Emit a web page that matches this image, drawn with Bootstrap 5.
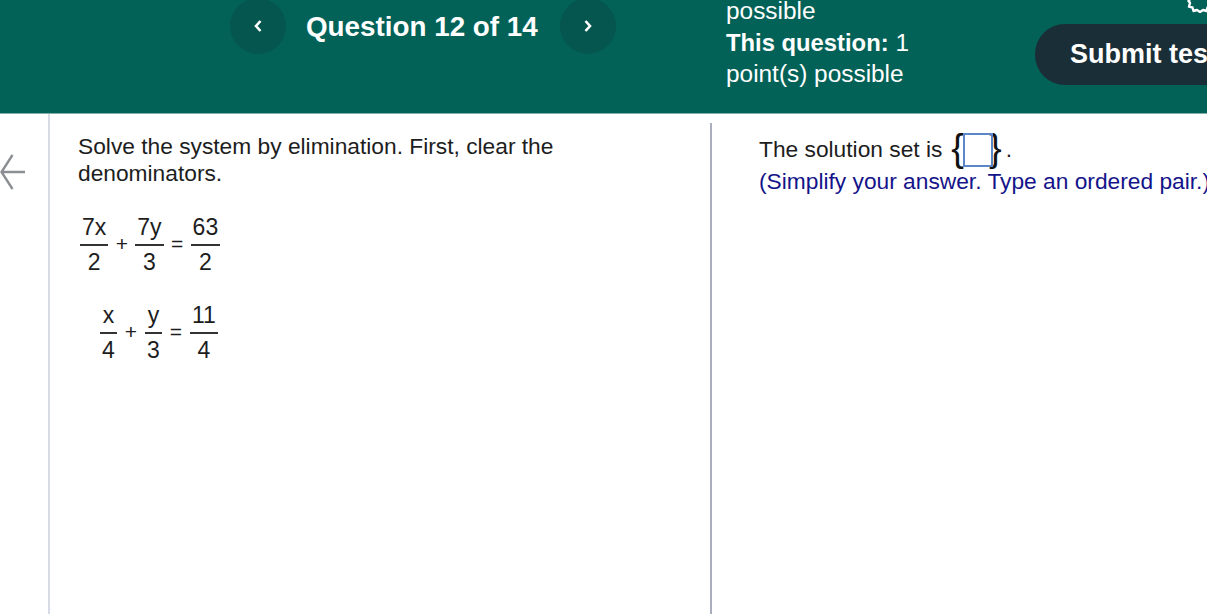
<!DOCTYPE html>
<html lang="en"><head><meta charset="utf-8"><title>Question 12 of 14</title>
<link href="https://cdn.jsdelivr.net/npm/bootstrap@5.3.0/dist/css/bootstrap.min.css" rel="stylesheet">
<style>
html,body{height:614px;overflow:hidden}
body{font-family:"Liberation Sans",Arial,sans-serif;color:#1d1d1d;background:#fff}
.topbar{height:114px;background:#036258;border-bottom:1px solid #7fb0aa;color:#fff;overflow:hidden;padding-left:230px}
.navcirc{width:56px;height:56px;margin-top:-2px;border-radius:50%;background:#05564e;flex:none}
.qtitle{font-size:27.8px;font-weight:700;width:274px;flex:none;padding-left:20px;line-height:54px;white-space:nowrap}
.pts{width:309px;flex:none;font-size:24.4px;line-height:31.5px;margin-top:-5px;margin-left:110px}
.pts b{font-weight:700;font-size:23.8px}
.submitwrap{flex:none;position:relative;width:172px}
.submitbtn{margin-top:24px;height:61px;width:260px;background:#1a2e38;color:#fff;border:0;border-radius:30px 0 0 30px;font-size:27px;font-weight:700;padding:0 0 0 35px;text-align:left;white-space:nowrap}
.gear{position:absolute;left:152px;top:-13px}
.mainrow{height:500px}
.rail{width:50px;flex:none;border-right:2px solid #d6dbe6;padding-top:39px}
.leftpane{width:660px;flex:none;padding:19px 0 0 28px;font-size:22.75px;line-height:27px}
.divline{width:2px;flex:none;background:#a9adbe;margin-top:9px}
.rightpane{flex:1 1 auto;padding:19px 0 0 47px;font-size:22.75px;line-height:32px;white-space:nowrap;overflow:hidden}
.prompt{width:490px}
.eq{display:flex;align-items:center;font-size:23px;line-height:25px}
.eq1{margin-top:28px;padding-left:2px}
.eq2{margin-top:28px;padding-left:22px}
.frac{display:inline-flex;flex-direction:column;align-items:center}
.frac span:first-child{border-bottom:2px solid #333;padding:0 2px 4px;min-width:17px;text-align:center}
.frac span:last-child{padding-top:4px}
.op{font-size:21px;width:27px;text-align:center;margin-top:-3px}
.eq2 .op{width:28px}
.hint{color:#14148a}
.ansline{display:flex;align-items:center;height:32px}
.ansbox{display:block;width:30px;height:34px;border:2px solid #5b86c9;margin:1px -4px 0 -1px;position:relative}
.brc{font-size:38px;line-height:32px;color:#111;margin-top:-3px}
.brcl{margin-left:9px}
.dotend{margin-left:4px}
</style></head>
<body>
<header class="topbar d-flex align-items-start">
  <div class="navcirc d-flex align-items-center justify-content-center"><svg width="10" height="14" viewBox="0 0 10 14"><path d="M7.500 2 3 7l4.500 5" fill="none" stroke="#fff" stroke-width="2.600"/></svg></div>
  <div class="qtitle">Question 12 of 14</div>
  <div class="navcirc d-flex align-items-center justify-content-center"><svg width="10" height="14" viewBox="0 0 10 14"><path d="M2.500 2 7 7l-4.500 5" fill="none" stroke="#fff" stroke-width="2.600"/></svg></div>
  <div class="pts"><div>possible<br><b>This question:</b> 1<br>point(s) possible</div></div>
  <div class="submitwrap">
    <svg class="gear" width="26" height="26" viewBox="0 0 26 26"><path d="M13 2.500l3 2.500 3.500-1 1 3.500 3.500 1-1 3.500 1.500 2-1.500 2 1 3.500-3.500 1-1 3.500-3.500-1-3 2-3-2-3.500 1-1-3.500-3.500-1 1-3.500-1.500-2 1.500-2-1-3.500 3.500-1 1-3.500 3.500 1z" fill="none" stroke="#fff" stroke-width="2.400" stroke-linejoin="round"/></svg>
    <button class="submitbtn" type="button">Submit test</button>
  </div>
</header>
<main class="mainrow d-flex">
  <div class="rail"><svg width="26" height="38" viewBox="0 0 26 38"><path d="M25 19H2M12.500 2 1.500 19l11 17" fill="none" stroke="#8b8f93" stroke-width="2.400"/></svg></div>
  <section class="leftpane">
    <div class="prompt">Solve the system by elimination. First, clear the denominators.</div>
    <div class="eq eq1"><span class="frac"><span>7x</span><span>2</span></span><span class="op">+</span><span class="frac"><span>7y</span><span>3</span></span><span class="op">=</span><span class="frac"><span>63</span><span>2</span></span></div>
    <div class="eq eq2"><span class="frac"><span>x</span><span>4</span></span><span class="op">+</span><span class="frac"><span>y</span><span>3</span></span><span class="op">=</span><span class="frac"><span>11</span><span>4</span></span></div>
  </section>
  <div class="divline"></div>
  <section class="rightpane">
    <div class="ansline"><span>The solution set is</span><span class="brc brcl">{</span><span class="ansbox"></span><span class="brc">}</span><span class="dotend">.</span></div>
    <div class="hint">(Simplify your answer. Type an ordered pair.)</div>
  </section>
</main>
</body></html>
